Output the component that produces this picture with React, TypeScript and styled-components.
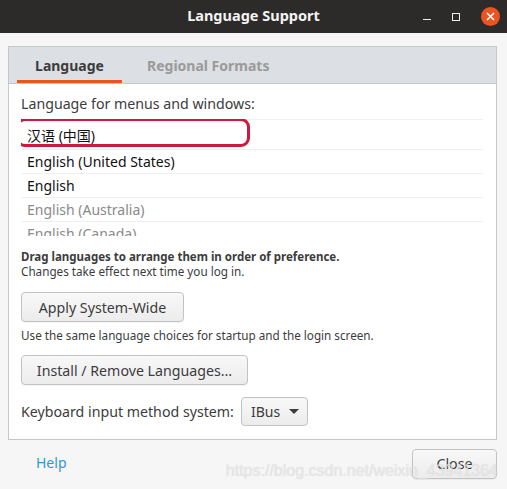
import React from 'react';
import styled, { createGlobalStyle } from 'styled-components';

const GlobalStyle = createGlobalStyle`
    html, body {
        margin: 0;
        padding: 0;
        background: #f6f6f6;
    }
    body {
        font-family: "Noto Sans", "Noto Sans CJK SC", sans-serif;
        color: #3c3c3c;
    }
`;

const Window = styled.div`
    position: relative;
    width: 507px;
    height: 489px;
    display: flex;
    flex-direction: column;
    background: #f6f6f6;
    overflow: hidden;
`;

const TitleBar = styled.div`
    height: 33px;
    flex: none;
    background: #2d2b29;
    display: flex;
    align-items: center;
    justify-content: center;
    position: relative;
`;

const Title = styled.div`
    color: #f4f4f4;
    font-size: 14.5px;
    font-weight: bold;
    margin-bottom: 3px;
`;

const Controls = styled.div`
    position: absolute;
    right: 7px;
    top: 0;
    height: 33px;
    display: flex;
    align-items: center;
    gap: 21px;
`;

const MinIcon = styled.div`
    width: 8px;
    height: 1px;
    background: #eee;
    margin-top: 6px;
`;

const MaxIcon = styled.div`
    width: 6px;
    height: 6px;
    border: 1px solid #eee;
`;

const CloseDot = styled.div`
    width: 19px;
    height: 19px;
    border-radius: 50%;
    background: #e95420;
    display: flex;
    align-items: center;
    justify-content: center;
`;

const Body = styled.div`
    flex: 1;
    padding: 13px 10px 0 8px;
    display: flex;
    flex-direction: column;
`;

const Notebook = styled.div`
    border: 1px solid #c4c8cc;
    background: #fff;
`;

const TabBar = styled.div`
    height: 36px;
    background: #dcdfe3;
    border-bottom: 1px solid #c4c8cc;
    display: flex;
    padding-left: 8px;
    gap: 4px;
`;

const Tab = styled.div<{ $active?: boolean }>`
    display: flex;
    align-items: center;
    justify-content: center;
    font-size: 14px;
    font-weight: bold;
    color: ${p => (p.$active ? '#3c3c3c' : '#9a9a9a')};
    box-shadow: ${p => (p.$active ? 'inset 0 -3px 0 #e95420' : 'none')};
    padding: 0 ${p => (p.$active ? 0 : 16)}px;
    width: ${p => (p.$active ? '105px' : 'auto')};
    margin-left: ${p => (p.$active ? 0 : 5)}px;
`;

const Page = styled.div`
    padding: 11px 13px 13px 12px;
    display: flex;
    flex-direction: column;
`;

const Label = styled.div`
    font-size: 14.2px;
    line-height: 18px;
    color: #3c3c3c;
`;

const List = styled.div`
    position: relative;
    margin-top: 6px;
    height: 117px;
    overflow: hidden;
    padding-left: 1px;
`;

const Row = styled.div<{ $dim?: boolean; $tall?: boolean }>`
    height: ${p => (p.$tall ? 29 : 23)}px;
    flex: none;
    border-top: 1px solid #efefef;
    display: flex;
    align-items: center;
    padding-left: 5px;
    font-size: 14px;
    color: ${p => (p.$dim ? '#8a8a8a' : '#111')};
`;

const Scrollbar = styled.div`
    position: absolute;
    right: -3px;
    top: 3px;
    width: 3px;
    height: 85px;
    border-radius: 2px;
    background: #ababab;
`;

const Highlight = styled.div`
    position: absolute;
    left: -5px;
    top: -1px;
    width: 228px;
    height: 23px;
    border: 3px solid #d0173d;
    border-radius: 9px;
`;

const HintBold = styled.div`
    margin-top: 13px;
    font-size: 11.5px;
    line-height: 15px;
    font-weight: bold;
    color: #3c3c3c;
`;

const Hint = styled.div<{ $gap?: number }>`
    margin-top: ${p => p.$gap ?? 0}px;
    font-size: 11.7px;
    line-height: 15px;
    color: #3c3c3c;
`;

const Button = styled.button<{ $gap?: number; $w?: number }>`
    margin-top: ${p => p.$gap ?? 0}px;
    width: ${p => p.$w}px;
    height: 30px;
    flex: none;
    border: 1px solid #c0c3c6;
    border-radius: 4px;
    background: linear-gradient(#f8f8f8, #ececec);
    font-family: "Noto Sans", sans-serif;
    font-size: 14.2px;
    color: #3c3c3c;
    padding: 0;
    box-shadow: 0 1px 0 rgba(0, 0, 0, 0.04);
`;

const KeyboardRow = styled.div`
    margin-top: 12px;
    display: flex;
    align-items: center;
    gap: 7px;
`;

const Combo = styled.div`
    width: 67px;
    height: 29px;
    border: 1px solid #c0c3c6;
    border-radius: 4px;
    background: linear-gradient(#f8f8f8, #ececec);
    display: flex;
    align-items: center;
    padding-left: 9px;
    box-sizing: border-box;
    gap: 9px;
    font-size: 14px;
    color: #3c3c3c;
`;

const Caret = styled.div`
    width: 0;
    height: 0;
    border-left: 5px solid transparent;
    border-right: 5px solid transparent;
    border-top: 5px solid #3c3c3c;
`;

const Footer = styled.div`
    flex: 1;
    display: flex;
    align-items: center;
    justify-content: space-between;
    padding: 0 0 2px 28px;
`;

const HelpLink = styled.span`
    color: #2a9bd0;
    font-size: 14px;
    margin-bottom: 3px;
`;

const Watermark = styled.div`
    position: absolute;
    right: 9px;
    bottom: 9px;
    font-family: "Liberation Sans", Arial, sans-serif;
    font-size: 16px;
    color: rgba(235, 235, 235, 0.75);
    text-shadow: 0 0 1px rgba(150, 150, 150, 0.35);
    pointer-events: none;
`;

const rows = [
    { text: '汉语 (中国)', tall: true },
    { text: 'English (United States)' },
    { text: 'English' },
    { text: 'English (Australia)', dim: true },
    { text: 'English (Canada)', dim: true },
];

export default function App() {
    return (
        <>
            <GlobalStyle />
            <Window>
                <TitleBar>
                    <Title>Language Support</Title>
                    <Controls>
                        <MinIcon />
                        <MaxIcon />
                        <CloseDot>
                            <svg width="9" height="9" viewBox="0 0 9 9">
                                <path d="M1 1L8 8M8 1L1 8" stroke="#fff" strokeWidth="1.6" />
                            </svg>
                        </CloseDot>
                    </Controls>
                </TitleBar>
                <Body>
                    <Notebook>
                        <TabBar>
                            <Tab $active>Language</Tab>
                            <Tab>Regional Formats</Tab>
                        </TabBar>
                        <Page>
                            <Label>Language for menus and windows:</Label>
                            <List>
                                {rows.map(r => (
                                    <Row key={r.text} $dim={r.dim} $tall={r.tall}>
                                        {r.text}
                                    </Row>
                                ))}
                                <Scrollbar />
                                <Highlight />
                            </List>
                            <HintBold>Drag languages to arrange them in order of preference.</HintBold>
                            <Hint>Changes take effect next time you log in.</Hint>
                            <Button $gap={13} $w={163}>Apply System-Wide</Button>
                            <Hint $gap={6}>Use the same language choices for startup and the login screen.</Hint>
                            <Button $gap={12} $w={227}>Install / Remove Languages...</Button>
                            <KeyboardRow>
                                <Label>Keyboard input method system:</Label>
                                <Combo>
                                    IBus
                                    <Caret />
                                </Combo>
                            </KeyboardRow>
                        </Page>
                    </Notebook>
                    <Footer>
                        <HelpLink>Help</HelpLink>
                        <Button $w={85}>Close</Button>
                    </Footer>
                </Body>
                <Watermark>https://blog.csdn.net/weixin_43941364</Watermark>
            </Window>
        </>
    );
}
